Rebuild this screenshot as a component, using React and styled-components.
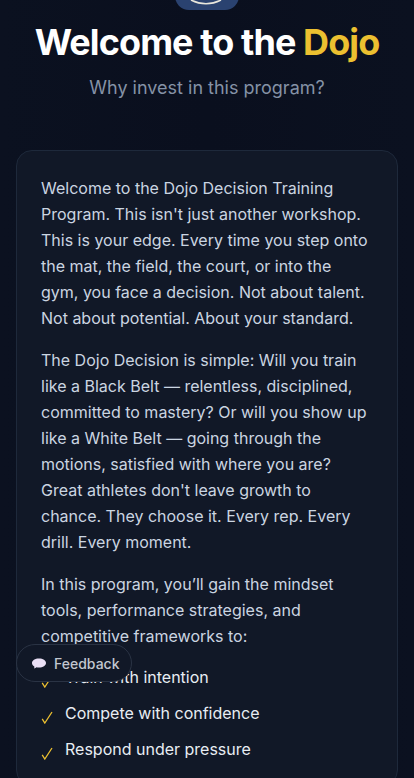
import React from 'react';
import styled, { createGlobalStyle } from 'styled-components';

const GlobalStyle = createGlobalStyle`
  html, body {
    margin: 0;
    height: 100%;
    overflow: hidden;
    background: #0a0f1e;
  }
  body {
    font-family: Inter, "Liberation Sans", sans-serif;
  }
`;

const Page = styled.div`
  height: 778px;
  overflow: hidden;
  position: relative;
  padding: 0 16px;
  box-sizing: border-box;
  background: linear-gradient(90deg, #0b1120 0%, #0a0f1e 50%, #0b1120 100%);
`;

const Header = styled.header`
  display: flex;
  flex-direction: column;
  align-items: center;
  margin-top: -54px;
`;

const LogoBox = styled.div`
  width: 64px;
  height: 64px;
  border-radius: 14px;
  background: #2a4270;
  display: flex;
  align-items: flex-end;
  justify-content: center;
  overflow: hidden;
`;

const Title = styled.h1`
  margin: 12px 0 0;
  font-size: 36px;
  line-height: 40px;
  font-weight: 700;
  letter-spacing: -0.9px;
  color: #fff;
  white-space: nowrap;
`;

const Gold = styled.span`
  color: #ecc030;
`;

const Subtitle = styled.p`
  margin: 12px 0 0;
  font-size: 18px;
  line-height: 28px;
  color: #8592a6;
`;

const Card = styled.section`
  margin-top: 48px;
  padding: 24px 24px;
  border: 1px solid #1e293b;
  border-radius: 16px;
  background: #111827;
`;

const Para = styled.p`
  margin: 0 0 16px;
  font-size: 16px;
  line-height: 26px;
  color: #cbd5e1;
`;

const List = styled.ul`
  margin: 0;
  padding: 0;
  list-style: none;
  display: flex;
  flex-direction: column;
  gap: 12px;
`;

const Item = styled.li`
  display: flex;
  align-items: flex-start;
  gap: 12px;
  font-size: 16px;
  line-height: 24px;
  color: #e8edf3;
`;

const Check = styled.svg`
  width: 12px;
  height: 13px;
  margin-top: 10px;
  flex: none;
`;

const FeedbackButton = styled.button`
  position: absolute;
  left: 16px;
  top: 644px;
  height: 38px;
  width: 116px;
  box-sizing: border-box;
  padding: 0 0 0 15px;
  display: flex;
  align-items: center;
  gap: 8px;
  border: 1px solid #2a3344;
  border-radius: 19px;
  background: #111827;
  color: #c2c7d0;
  font-family: Inter, "Liberation Sans", sans-serif;
  font-size: 14px;
  font-weight: 500;
`;

const items = ['Train with intention', 'Compete with confidence', 'Respond under pressure'];

const CheckIcon = () => (
  <Check viewBox="0 0 12 13" fill="none" stroke="#ecc030" strokeWidth="1.3">
    <path d="M1.2 7.8 L3.8 12 L11 1" />
  </Check>
);

const App = () => (
  <Page>
    <GlobalStyle />
    <Header>
      <LogoBox>
        <svg width="64" height="10" viewBox="0 0 64 10" fill="none">
          <path d="M16 0 Q31 7.5 46 0" stroke="#e8e6dc" strokeWidth="1.6" />
        </svg>
      </LogoBox>
      <Title>
        Welcome to the <Gold>Dojo</Gold>
      </Title>
      <Subtitle>Why invest in this program?</Subtitle>
    </Header>
    <Card>
      <Para>
        Welcome to the Dojo Decision Training Program. This isn't just another workshop. This is your edge. Every time you step onto the mat, the field, the court, or into the gym, you face a decision. Not about talent. Not about potential. About your standard.
      </Para>
      <Para>
        The Dojo Decision is simple: Will you train like a Black Belt — relentless, disciplined, committed to mastery? Or will you show up like a White Belt — going through the motions, satisfied with where you are? Great athletes don't leave growth to chance. They choose it. Every rep. Every drill. Every moment.
      </Para>
      <Para>
        In this program, you’ll gain the mindset tools, performance strategies, and competitive frameworks to:
      </Para>
      <List>
        {items.map((item) => (
          <Item key={item}>
            <CheckIcon />
            {item}
          </Item>
        ))}
      </List>
    </Card>
    <FeedbackButton>
      <svg width="14" height="11" viewBox="0 0 14 11">
        <path d="M7 0.5 C11 0.5 14 2.4 14 5 C14 7.6 11 9.5 7 9.5 C6 9.5 5.2 9.4 4.4 9.2 C3.7 10 2.8 10.3 2 10.4 C2.4 9.7 2.5 9 2.3 8.4 C0.8 7.6 0 6.4 0 5 C0 2.4 3 0.5 7 0.5 Z" fill="#eadff5" />
      </svg>
      Feedback
    </FeedbackButton>
  </Page>
);

export default App;
